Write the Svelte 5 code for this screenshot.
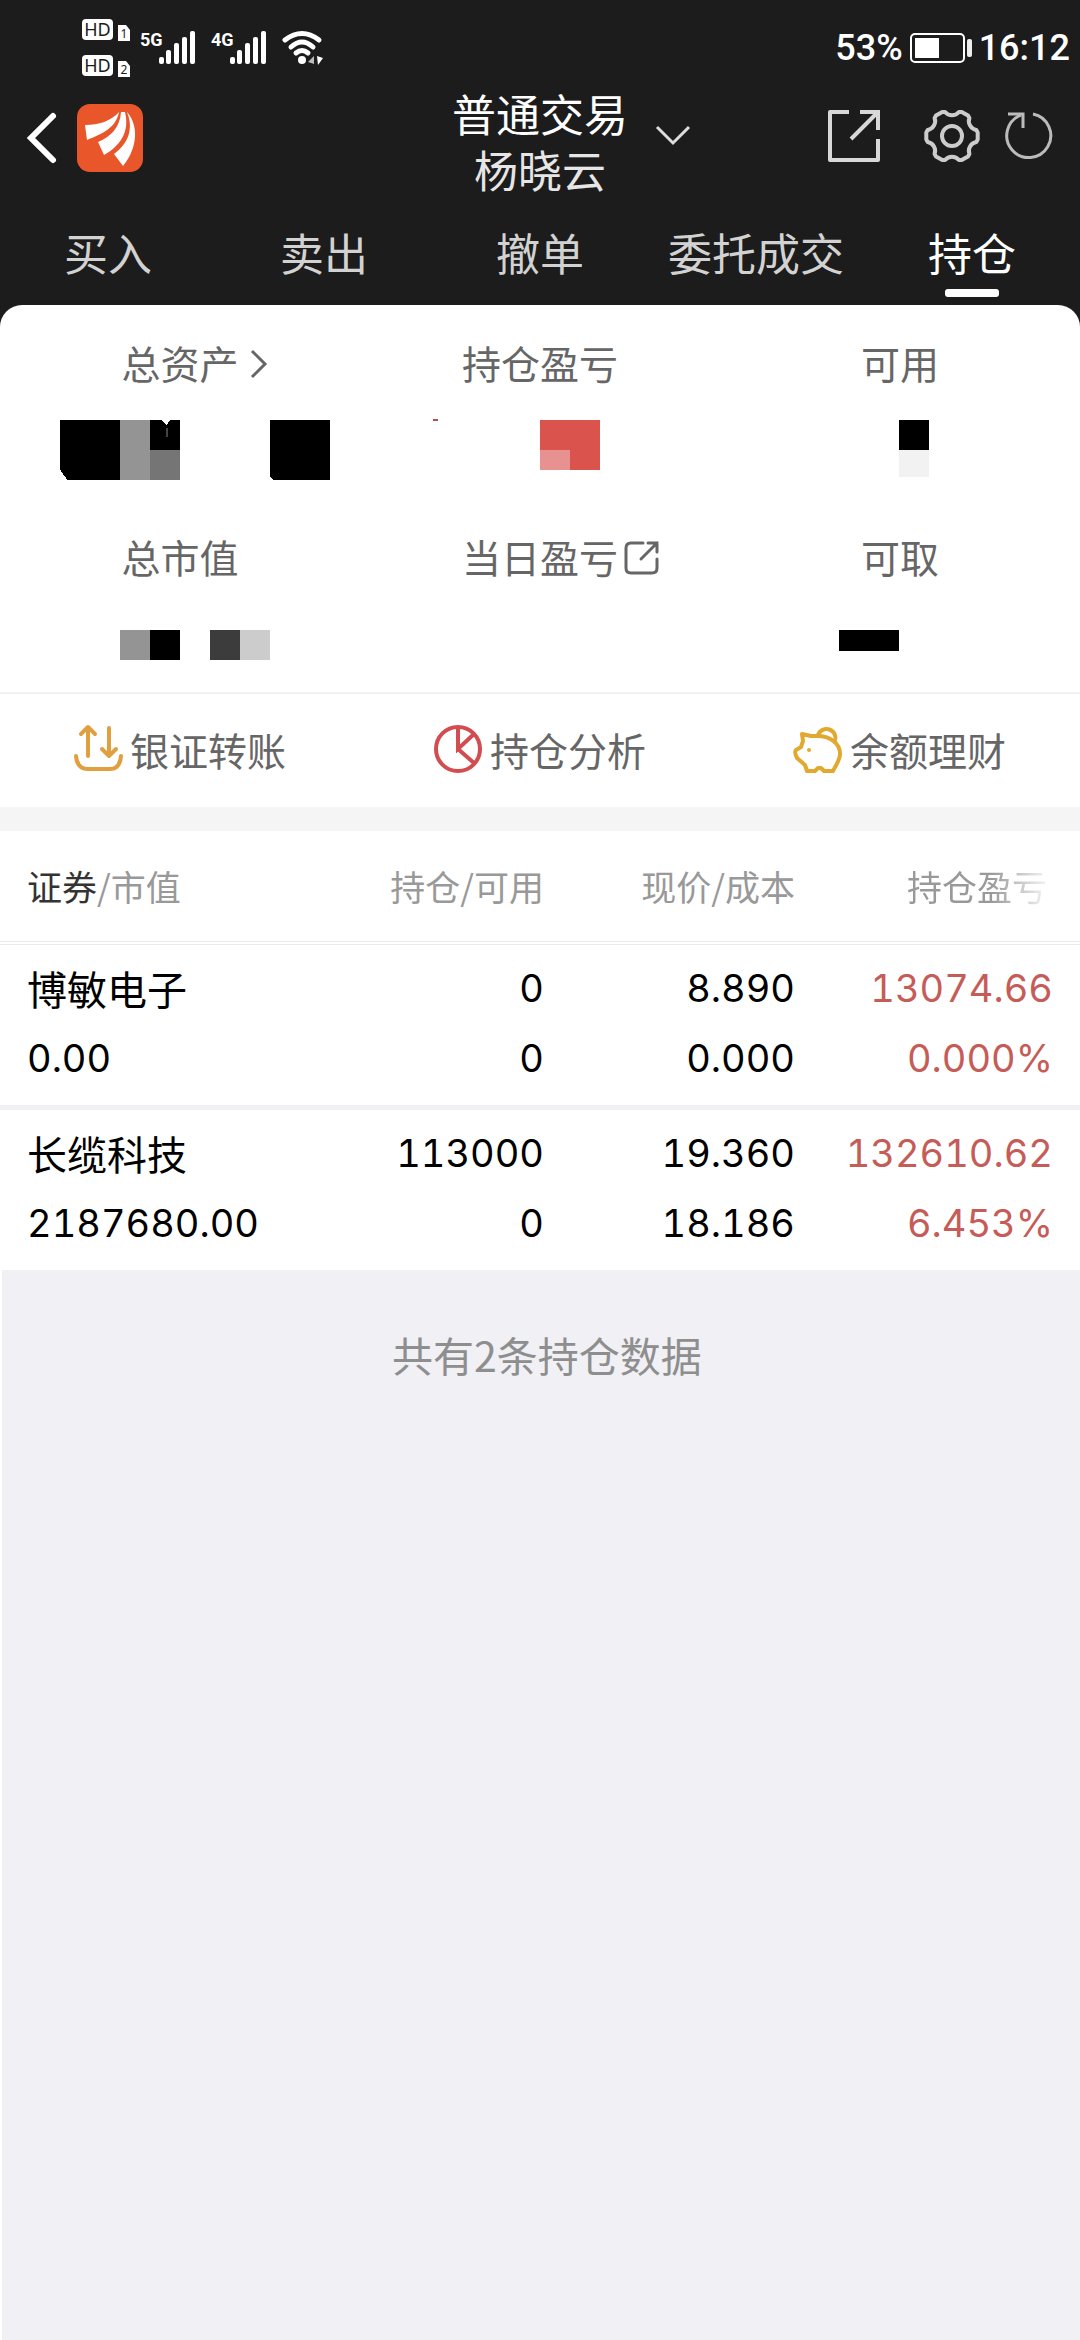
<script lang="ts">
	const tabs = ["买入", "卖出", "撤单", "委托成交", "持仓"];
	let active = $state("持仓");

	type Block = { x: number; y: number; w: number; h: number; fill: string };

	// hidden amounts are drawn as blocks inside a 360x60 cell
	const summary: { label: string; icon?: string; blocks: Block[] }[] = [
		{
			label: "总资产",
			icon: "arrow",
			blocks: [
				{ x: 60, y: 0, w: 60, h: 60, fill: "#000" },
				{ x: 120, y: 0, w: 30, h: 60, fill: "#949494" },
				{ x: 150, y: 0, w: 30, h: 30, fill: "#000" },
				{ x: 150, y: 30, w: 30, h: 30, fill: "#757575" },
				{ x: 270, y: 0, w: 60, h: 60, fill: "#000" },
			],
		},
		{
			label: "持仓盈亏",
			blocks: [
				{ x: 73, y: -1, w: 5, h: 2, fill: "#b5504c" },
				{ x: 180, y: 0, w: 60, h: 50, fill: "#da534d" },
				{ x: 180, y: 30, w: 30, h: 20, fill: "#e79291" },
			],
		},
		{
			label: "可用",
			blocks: [
				{ x: 179, y: 0, w: 30, h: 30, fill: "#000" },
				{ x: 179, y: 30, w: 30, h: 27, fill: "#f2f2f2" },
			],
		},
		{
			label: "总市值",
			blocks: [
				{ x: 120, y: 16, w: 30, h: 30, fill: "#949494" },
				{ x: 150, y: 16, w: 30, h: 30, fill: "#000" },
				{ x: 210, y: 16, w: 30, h: 30, fill: "#3c3c3c" },
				{ x: 240, y: 16, w: 30, h: 30, fill: "#ccc" },
			],
		},
		{ label: "当日盈亏", icon: "open", blocks: [] },
		{
			label: "可取",
			blocks: [{ x: 119, y: 16, w: 60, h: 21, fill: "#000" }],
		},
	];

	const holdings = [
		{
			name: "博敏电子",
			value: "0.00",
			amount: "0",
			usable: "0",
			price: "8.890",
			cost: "0.000",
			profit: "13074.66",
			percent: "0.000%",
		},
		{
			name: "长缆科技",
			value: "2187680.00",
			amount: "113000",
			usable: "0",
			price: "19.360",
			cost: "18.186",
			profit: "132610.62",
			percent: "6.453%",
		},
	];

	// six teeth around a 28,28 centre
	function gearPath() {
		const at = (deg: number, r: number) => {
			const a = (deg * Math.PI) / 180;
			return `${(28 + r * Math.cos(a)).toFixed(1)} ${(28 + r * Math.sin(a)).toFixed(1)}`;
		};
		let d = `M${at(-14, 25)}`;
		for (let i = 0; i < 360; i += 60) {
			d += `L${at(i - 8, 26)}L${at(i + 8, 26)}L${at(i + 14, 25)}A9 9 0 0 0 ${at(i + 46, 25)}`;
		}
		return d + "Z";
	}
</script>

{#snippet sim(n: string)}
	<svg width="48" height="22" viewBox="0 0 48 22">
		<rect width="31" height="21" rx="4" fill="#fff" />
		<text x="15.5" y="17" text-anchor="middle" font-size="18" fill="#1c1c1c">HD</text>
		<path d="M36 6h8l4 5v11H36z" fill="#fff" />
		<text x="42" y="19" text-anchor="middle" font-size="12" fill="#1c1c1c">{n}</text>
	</svg>
{/snippet}

{#snippet signal(label: string)}
	<svg width="54" height="34" viewBox="0 0 54 34" fill="#fff">
		<text class="net" x="-1" y="15">{label}</text>
		<rect x="18" y="26" width="5" height="7" rx="2" />
		<rect x="25" y="19" width="5" height="14" rx="2" />
		<rect x="33" y="12" width="5" height="21" rx="2" />
		<rect x="41" y="6" width="5" height="27" rx="2" />
		<rect x="49" y="0" width="5" height="33" rx="2" />
	</svg>
{/snippet}

<div class="app">
	<header>
		<div class="status">
			<div class="sims">
				{@render sim("1")}
				{@render sim("2")}
			</div>
			{@render signal("5G")}
			{@render signal("4G")}
			<svg width="42" height="34" viewBox="0 0 42 34" fill="none" stroke="#fff" stroke-width="5" stroke-linecap="round">
				<path d="M2 9Q19-4 36 9" />
				<path d="M8 16Q19 6 30 16" />
				<path d="M13 22Q19 17 25 22" />
				<circle cx="19" cy="29" r="4" fill="#fff" stroke="none" />
				<path d="M25 31l6-6v8z" fill="#bbb" stroke="none" />
				<path d="M34 25l6 2-5 7z" fill="#fff" stroke="none" />
			</svg>
			<span class="level">53%</span>
			<svg width="62" height="30" viewBox="0 0 62 30">
				<rect x="1" y="1" width="53" height="28" rx="4" fill="none" stroke="#fff" stroke-width="2" />
				<rect x="5" y="5" width="24" height="20" fill="#fff" />
				<rect x="57" y="6" width="5" height="18" rx="2" fill="#eee" />
			</svg>
			<span>16:12</span>
		</div>

		<nav class="bar">
			<div class="left">
				<button aria-label="返回">
					<svg width="29" height="50" viewBox="0 0 29 50" fill="none" stroke="#fff" stroke-width="6" stroke-linecap="round">
						<path d="M25 3L3 25l22 22" />
					</svg>
				</button>
				<svg width="66" height="68" viewBox="0 0 66 68">
					<rect width="66" height="68" rx="13" fill="#e9562a" />
					<g fill="#fff">
						<path d="M8 21C22 21 34 17 42 8C39 24 25 30 10 36Z" />
						<path d="M44 8C43 24 33 33 21 38L27 51C43 42 53 28 48 8Z" />
						<path d="M50 8C64 24 58 48 46 62L37 50C51 40 57 25 50 8Z" />
					</g>
				</svg>
			</div>
			<h1>普通交易<small>杨晓云</small></h1>
			<div class="right">
				<button class="switch" aria-label="切换账户">
					<svg width="34" height="20" viewBox="0 0 34 20" fill="none" stroke="#ddd" stroke-width="3">
						<path d="M1 1l16 16L33 1" />
					</svg>
				</button>
				<button aria-label="分享">
					<svg width="52" height="52" viewBox="0 0 52 52" fill="none" stroke="#d8d8d8" stroke-width="4" stroke-linejoin="round">
						<path d="M21 2H2v48h48V29" />
						<path d="M32 2h18v18M50 2L23 29" stroke-linejoin="miter" />
					</svg>
				</button>
				<button class="gear" aria-label="设置">
					<svg width="56" height="56" viewBox="0 0 56 56" fill="none" stroke="#ccc" stroke-width="4" stroke-linejoin="round">
						<path d={gearPath()} />
						<circle cx="28" cy="28" r="10" />
					</svg>
				</button>
				<button aria-label="刷新">
					<svg width="48" height="50" viewBox="0 0 48 50" fill="none" stroke="#bbb" stroke-width="3">
						<path d="M28 3A22 22 0 1 1 16 4" />
						<path d="M3 3h15v14" />
					</svg>
				</button>
			</div>
		</nav>

		<div class="tabs">
			{#each tabs as tab}
				<button class:active={tab === active} onclick={() => (active = tab)}>{tab}</button>
			{/each}
		</div>
	</header>

	<main>
		<section>
			<div class="summary">
				{#each summary as item}
					<div class="item">
						<div class="label">
							{item.label}
							{#if item.icon === "arrow"}
								<svg class="mark" width="32" height="34" viewBox="0 0 32 34" fill="none" stroke="#666" stroke-width="3">
									<path d="M13 4l13 13-13 13" />
								</svg>
							{:else if item.icon === "open"}
								<svg class="mark" width="42" height="34" viewBox="0 0 42 34" fill="none" stroke="#666" stroke-width="3" stroke-linecap="round">
									<path d="M25 2H13Q8 2 8 7V27Q8 32 13 32H34Q39 32 39 27V18" />
									<path d="M30 2h9v9M39 2L23 18" />
								</svg>
							{/if}
						</div>
						<svg class="hidden" width="360" height="60" viewBox="0 0 360 60" shape-rendering="crispEdges">
							{#each item.blocks as b}
								<rect x={b.x} y={b.y} width={b.w} height={b.h} fill={b.fill} />
							{/each}
							{#if item.label === "总资产"}
								<path d="M59 48v13h9zM269 56v5h5z" fill="#fff" />
								<path d="M161 0h9l-3 5-2-1z" fill="#fff" />
								<path d="M167 8v9" stroke="#444" stroke-width="2" />
							{/if}
						</svg>
					</div>
				{/each}
			</div>

			<div class="actions">
				<button>
					<svg width="50" height="48" viewBox="0 0 50 48" fill="none" stroke="#e0a040" stroke-width="4" stroke-linecap="round" stroke-linejoin="round">
						<path d="M14 3v28M7 9l7-7 7 7" />
						<path d="M35 3v28M28 24l7 7 7-7" />
						<path d="M2 31Q3 44 14 44H36Q46 44 47 31" />
					</svg>
					银证转账
				</button>
				<button>
					<svg width="50" height="48" viewBox="0 0 50 48" fill="none" stroke="#d24c50" stroke-width="4">
						<circle cx="24" cy="24" r="22" />
						<path d="M24 2V24L40 9M24 24L40 38" />
					</svg>
					持仓分析
				</button>
				<button>
					<svg width="50" height="48" viewBox="0 0 50 48" fill="none" stroke="#e2a92f" stroke-width="4" stroke-linejoin="round">
						<path d="M8 9L17 11H23C36 11 46 18 46 29C46 35 42 40 39 46H30L27 43H24L21 46H13L11 40L3 33Q0 27 2 25L7 22L9 16Z" />
						<path d="M24 10A9 9 0 1 1 41 16" />
						<circle cx="15" cy="25" r="2" fill="#e2a92f" stroke="none" />
					</svg>
					余额理财
				</button>
			</div>
		</section>

		<table>
			<colgroup>
				<col />
				<col class="c2" />
				<col class="c3" />
				<col class="c4" />
			</colgroup>
			<thead>
				<tr>
					<th><b>证券</b>/市值</th>
					<th>持仓/可用</th>
					<th>现价/成本</th>
					<th><span class="fade">持仓盈亏</span></th>
				</tr>
			</thead>
			<tbody>
				{#each holdings as row}
					<tr>
						<td><div>{row.name}</div><div class="num">{row.value}</div></td>
						<td class="num"><div>{row.amount}</div><div>{row.usable}</div></td>
						<td class="num"><div>{row.price}</div><div>{row.cost}</div></td>
						<td class="num up"><div>{row.profit}</div><div>{row.percent}</div></td>
					</tr>
				{/each}
			</tbody>
		</table>

		<p class="total">共有{holdings.length}条持仓数据</p>
	</main>
</div>

<style>
	:global(body) {
		margin: 0;
		background: #1c1c1c;
	}

	.app {
		display: flex;
		flex-direction: column;
		min-height: 100vh;
		background: #1c1c1c;
		font-family: "Noto Sans CJK SC", sans-serif;
	}

	svg {
		display: block;
		flex: none;
		overflow: visible;
	}

	button {
		padding: 0;
		border: 0;
		background: none;
		font: inherit;
		color: inherit;
		cursor: pointer;
	}

	/* status bar */
	.status {
		display: flex;
		align-items: center;
		box-sizing: border-box;
		height: 82px;
		padding: 14px 10px 0 82px;
		gap: 11px;
		color: #fff;
		font: 500 36px Roboto, sans-serif;
	}

	.sims {
		display: grid;
		gap: 14px;
		font-family: "Noto Sans", sans-serif;
		font-weight: 400;
	}

	.net {
		font: 700 18px Roboto, sans-serif;
	}

	.level {
		margin-left: auto;
	}

	.status > svg + svg {
		margin-left: 6px;
	}

	.level,
	.level + svg {
		margin-right: -4px;
	}

	/* title bar */
	.bar {
		display: grid;
		grid-template-columns: 1fr auto 1fr;
		height: 117px;
		color: #fff;
	}

	.left,
	.right {
		display: flex;
		align-items: center;
	}

	.left {
		gap: 20px;
		height: 112px;
		padding-left: 28px;
	}

	.right {
		height: 108px;
		padding: 0 27px 0 28px;
	}

	.switch {
		margin-right: auto;
	}

	.gear {
		margin: 0 25px 0 44px;
	}

	h1 {
		margin: 0;
		padding-top: 3px;
		font-size: 44px;
		font-weight: 400;
		line-height: 56px;
		text-align: center;
	}

	small {
		display: block;
		font-size: 44px;
		color: #e6e6e6;
	}

	.tabs {
		display: grid;
		grid-template-columns: repeat(5, 1fr);
		padding: 20px 0 8px;
		font-size: 44px;
		line-height: 66px;
		color: #d2d2d2;
	}

	.tabs button::after {
		content: "";
		display: block;
		width: 54px;
		height: 8px;
		margin: 4px auto 0;
		border-radius: 3px;
	}

	.tabs .active {
		color: #fff;
	}

	.tabs .active::after {
		background: #fff;
	}

	main {
		flex: 1;
		display: flex;
		flex-direction: column;
		border-radius: 22px 22px 0 0;
		background: #fff;
	}

	.summary {
		display: grid;
		grid-template-columns: repeat(3, 1fr);
		row-gap: 48px;
		padding: 29px 0 18px;
		border-bottom: 2px solid #f1f1f1;
		color: #666;
		font-size: 39px;
		line-height: 56px;
	}

	.item {
		display: grid;
		justify-items: center;
		gap: 30px;
	}

	.label {
		position: relative;
	}

	.mark {
		position: absolute;
		top: 13px;
		left: 100%;
	}

	.actions {
		display: grid;
		grid-template-columns: repeat(3, 1fr);
		height: 113px;
		color: #666;
		font-size: 39px;
	}

	.actions button {
		display: flex;
		align-items: center;
		justify-content: center;
		gap: 6px;
		padding-bottom: 4px;
	}

	/* holdings */
	table {
		width: 100%;
		table-layout: fixed;
		border-collapse: collapse;
		border-top: 24px solid #f5f5f5;
	}

	.c2 {
		width: 204px;
	}

	.c3 {
		width: 251px;
	}

	.c4 {
		width: 285px;
	}

	th,
	td {
		text-align: right;
		font-weight: 400;
		white-space: nowrap;
	}

	th {
		height: 108px;
		padding: 0 0 2px;
		border-bottom: 4px double #ececf0;
		color: #999;
		font-size: 35px;
	}

	td {
		padding: 8px 0 12px;
		color: #000;
		font-size: 40px;
		line-height: 70px;
	}

	th:first-child,
	td:first-child {
		padding-left: 27px;
		text-align: left;
	}

	th:last-child {
		padding-right: 33px;
	}

	td:last-child {
		padding-right: 27px;
	}

	b {
		font-weight: 400;
		color: #333;
	}

	.fade {
		background: linear-gradient(to right, #999 60%, #f4f4f4);
		background-clip: text;
		color: transparent;
	}

	.num {
		font-family: Inter, sans-serif;
		font-size: 38px;
		font-variant-numeric: tabular-nums;
	}

	.up {
		color: #c65c57;
	}

	tr + tr td {
		border-top: 5px solid #f0f0f5;
	}

	.total {
		flex: 1;
		margin: 0;
		padding: 56px 0 0 12px;
		border-left: 2px solid #fff;
		background: #f0f0f5;
		color: #8e8e8e;
		font-size: 41px;
		line-height: 56px;
		text-align: center;
	}
</style>
